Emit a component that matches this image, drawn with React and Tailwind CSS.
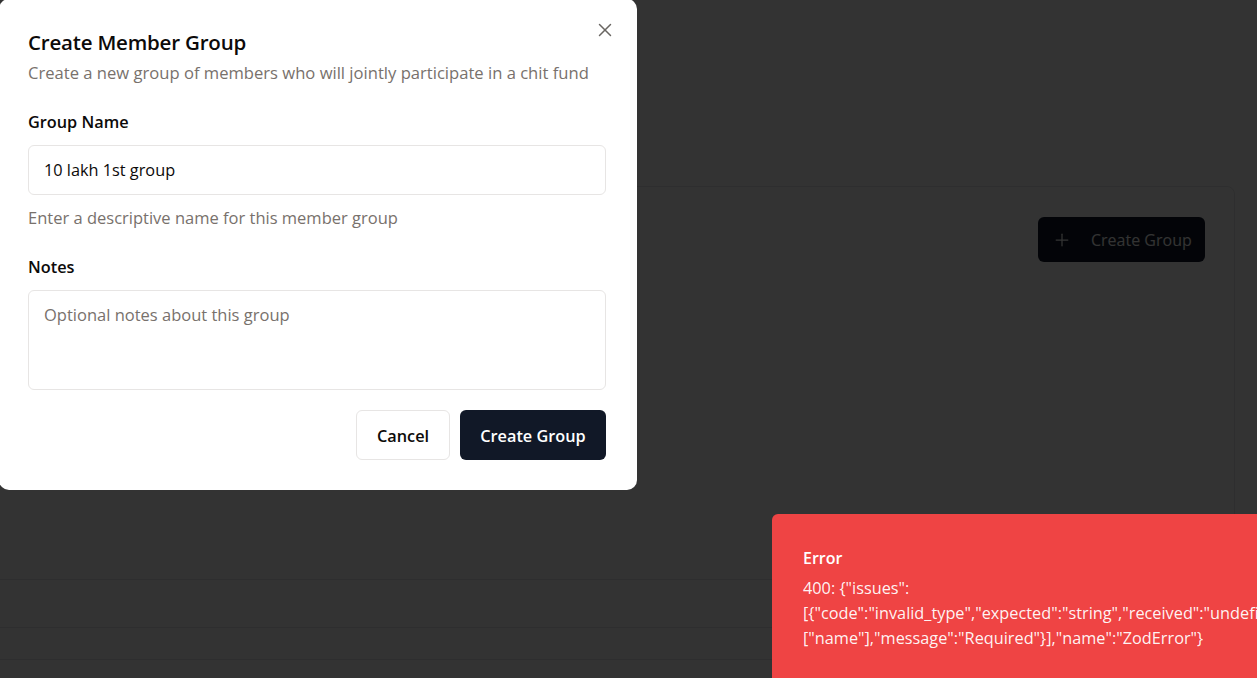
import { X, Plus } from "lucide-react";

const font = { fontFamily: '"Open Sans", "Noto Sans", sans-serif' };

function BackPage() {
  return (
    <div className="h-full w-full bg-white">
      <div className="ml-[-12px] mr-[22px] mt-[186px] h-[700px] rounded-lg border border-gray-200">
        <div className="flex justify-end px-[29px] pt-[30px]">
          <button className="flex h-[45px] w-[167px] items-center gap-[19px] whitespace-nowrap rounded-md bg-gray-900 pl-[14px] text-[16px] font-medium text-white">
            <Plus className="h-[20px] w-[20px] shrink-0" strokeWidth={1.5} />
            Create Group
          </button>
        </div>
        <div className="mt-[317px] border-b border-gray-200" />
        <div className="mt-[47px] border-b border-gray-200" />
        <div className="mt-[31px] border-b border-gray-200" />
      </div>
    </div>
  );
}

function Dialog() {
  return (
    <div className="absolute left-[-1px] top-[-1px] w-[638px] rounded-[10px] bg-white pb-[30px] pl-[29px] pr-[31px] pt-[29px] text-[#0c0a09]">
      <button className="absolute right-[21px] top-[20px] text-[#44403c] opacity-80">
        <X className="h-[22px] w-[22px]" strokeWidth={1.6} />
      </button>
      <h2 className="text-[20.5px] font-semibold leading-[28px] tracking-[-0.2px]">Create Member Group</h2>
      <p className="mt-[5px] text-[16.6px] leading-[24px] text-[#78716c]">
        Create a new group of members who will jointly participate in a chit fund
      </p>
      <div className="mt-[25px] text-[16.3px] font-semibold leading-[24px]">Group Name</div>
      <div className="mt-[11px] flex h-[50px] items-center rounded-md border border-[#e7e5e4] px-[15px] pt-[1px] text-[16.3px]">
        10 lakh 1st group
      </div>
      <p className="mt-[11px] text-[16.5px] leading-[24px] text-[#78716c]">
        Enter a descriptive name for this member group
      </p>
      <div className="mt-[25px] text-[16.3px] font-semibold leading-[24px]">Notes</div>
      <div className="mt-[11px] h-[100px] rounded-md border border-[#e7e5e4] px-[15px] pt-[12px] text-[16.5px] leading-[24px] text-[#78716c]">
        Optional notes about this group
      </div>
      <div className="mt-[20px] flex justify-end gap-[10px]">
        <button className="h-[50px] w-[94px] rounded-md border border-[#e7e5e4] bg-white pt-[2px] text-[16.3px] font-semibold">
          Cancel
        </button>
        <button className="h-[50px] w-[146px] rounded-md bg-[#111827] pt-[2px] text-[16.3px] font-semibold text-white">
          Create Group
        </button>
      </div>
    </div>
  );
}

function Toast() {
  return (
    <div className="absolute left-[772px] top-[514px] h-[200px] w-[540px] rounded-md bg-[#ef4444] pl-[31px] pt-[32px] text-white">
      <div className="text-[16px] font-semibold leading-[24px]">Error</div>
      <div className="mt-[6px] whitespace-nowrap text-[16.3px] leading-[25px] text-white/95">
        <div>400: {'{"issues":'}</div>
        <div>{'[{"code":"invalid_type","expected":"string","received":"undefined","path":'}</div>
        <div>{'["name"],"message":"Required"}],"name":"ZodError"}'}</div>
      </div>
    </div>
  );
}

export default function App() {
  return (
    <div className="relative h-[678px] w-full overflow-hidden" style={font}>
      <BackPage />
      <div className="absolute inset-0 bg-black/80" />
      <Dialog />
      <Toast />
    </div>
  );
}
